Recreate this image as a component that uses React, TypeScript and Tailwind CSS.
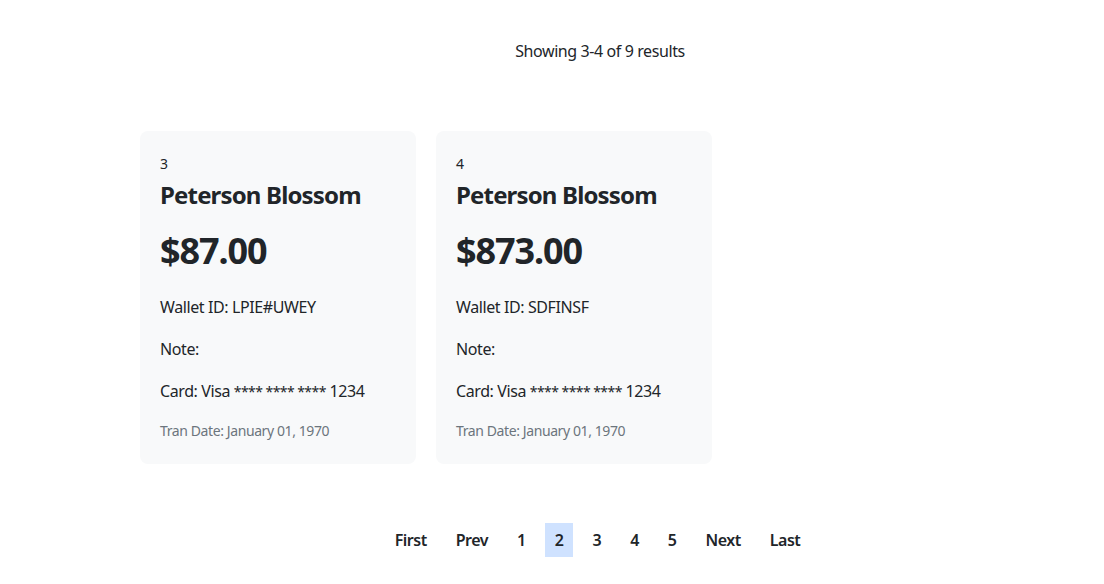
const transactions = [
  { id: 3, name: "Peterson Blossom", amount: "$87.00", wallet: "LPIE#UWEY", note: "", card: "Visa", number: "1234", date: "January 01, 1970" },
  { id: 4, name: "Peterson Blossom", amount: "$873.00", wallet: "SDFINSF", note: "", card: "Visa", number: "1234", date: "January 01, 1970" },
];

const pages = ["First", "Prev", "1", "2", "3", "4", "5", "Next", "Last"];

function App() {
  return (
    <div className="min-h-screen bg-white text-[#212529] font-['Segoe_UI','Noto_Sans',sans-serif] tracking-[-0.025em] pl-[140px] pr-[44px] pt-[39px]">
      <p className="text-center text-base leading-6">Showing 3-4 of 9 results</p>

      <div className="mt-[68px] flex gap-5">
        {transactions.map((t) => (
          <div key={t.id} className="w-[276px] rounded-lg bg-[#f8f9fa] px-5 pt-[22px] pb-[23px]">
            <div className="text-sm leading-[21px]">{t.id}</div>
            <h3 className="mt-[6px] text-2xl font-bold leading-[29px] tracking-[-0.035em]">{t.name}</h3>
            <h2 className="mt-[20px] text-4xl font-bold leading-[43px] tracking-[-0.03em]">{t.amount}</h2>
            <p className="mt-[22px] text-base leading-[26px]">Wallet ID: {t.wallet}</p>
            <p className="mt-4 text-base leading-[26px]">Note: {t.note}</p>
            <p className="mt-4 text-base leading-[26px]">
              Card: {t.card} <span className="text-[14px] tracking-[-0.04em]">**** **** ****</span> {t.number}
            </p>
            <p className="mt-[15px] text-sm leading-[21px] text-[#6c757d]">Tran Date: {t.date}</p>
          </div>
        ))}
      </div>

      <nav className="mt-[59px] mr-[5px] flex justify-center gap-[9px]">
        {pages.map((p) => (
          <button
            key={p}
            className={`h-[34px] px-[10px] text-base font-semibold tracking-[-0.03em] ${p === "2" ? "bg-[#cfe2ff]" : ""}`}
          >
            {p}
          </button>
        ))}
      </nav>
    </div>
  );
}

export default App;
